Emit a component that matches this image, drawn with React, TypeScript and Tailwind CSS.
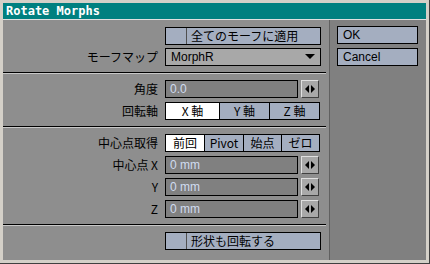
import React from 'react';

const jp = "font-['MS_Gothic','Noto_Sans_CJK_JP',sans-serif]";

function Arrows() {
  return (
    <div className="w-[18px] h-[18px] ml-[3px] bg-[#a8a8a8] border border-[#e0e0e0] border-r-[#404040] border-b-[#404040] flex items-center justify-center">
      <svg width="10" height="8" viewBox="0 0 10 8">
        <polygon points="4,0 4,8 0,4" fill="#000" />
        <polygon points="6,0 6,8 10,4" fill="#000" />
      </svg>
    </div>
  );
}

function Row({ label, children }: { label: string; children: React.ReactNode }) {
  return (
    <div className="flex items-center h-[18px]">
      <div className={`w-[155px] text-right text-[12px] text-black ${jp}`}>{label}</div>
      <div className="ml-[7px] flex items-center">{children}</div>
    </div>
  );
}

function Field({ value }: { value: string }) {
  return (
    <div className="flex items-center">
      <div className="w-[133px] h-[18px] bg-[#808080] border border-black text-[12px] text-[#d0dcf0] px-[4px] leading-[16px] font-['Liberation_Sans',sans-serif]">
        {value}
      </div>
      <Arrows />
    </div>
  );
}

function Seg({ items, active }: { items: { t: string; w: number }[]; active: number }) {
  return (
    <div className="flex h-[18px] border border-black">
      {items.map((it, i) => (
        <div
          key={it.t}
          style={{ width: it.w }}
          className={`flex items-center justify-center text-[12px] text-black ${jp} ${i > 0 ? 'border-l border-black' : ''} ${i === active ? 'bg-white' : 'bg-[#a4aec0]'}`}
        >
          {it.t}
        </div>
      ))}
    </div>
  );
}

function Sep() {
  return (
    <div className="my-[6px] mr-[3px]">
      <div className="h-[1px] bg-black" />
      <div className="h-[1px] bg-[#c8c8c8]" />
    </div>
  );
}

function Check({ label }: { label: string }) {
  return (
    <div className="flex w-[156px] h-[18px] border border-black bg-[#a4aec0]">
      <div className="w-[21px] border-r border-[#505050]" />
      <div className={`pl-[4px] text-[12px] leading-[16px] text-black ${jp}`}>{label}</div>
    </div>
  );
}

export default function App() {
  return (
    <div className="w-[430px] h-[264px] bg-[#d4d0c8] border-r border-b border-[#404040] pt-[3px] pl-[3px] pr-[3px] pb-[3px] flex flex-col">
      <div className="h-[16px] bg-[#008080] text-white font-bold text-[12px] leading-[16px] pl-[3px] font-['DejaVu_Sans_Mono',monospace]">
        Rotate Morphs
      </div>
      <div className="flex flex-1 border-t border-[#e0e0e0]">
        <div className="w-[327px] bg-[#8e8e8e] border-r border-[#606060] pt-[7px]">
          <div className="flex flex-col gap-[3px]">
            <Row label="">
              <Check label="全てのモーフに適用" />
            </Row>
            <Row label="モーフマップ">
              <div className="w-[156px] h-[18px] bg-[#a8a8a8] border border-black flex items-center justify-between px-[5px] text-[12px] text-black font-['Liberation_Sans',sans-serif]">
                MorphR
                <svg width="10" height="6" viewBox="0 0 10 6">
                  <polygon points="0,0 10,0 5,5" fill="#000" />
                </svg>
              </div>
            </Row>
          </div>
          <Sep />
          <div className="flex flex-col gap-[4px]">
            <Row label="角度">
              <Field value="0.0" />
            </Row>
            <Row label="回転軸">
              <Seg
                active={0}
                items={[
                  { t: 'X 軸', w: 53 },
                  { t: 'Y 軸', w: 50 },
                  { t: 'Z 軸', w: 50 },
                ]}
              />
            </Row>
          </div>
          <Sep />
          <div className="flex flex-col gap-[4px]">
            <Row label="中心点取得">
              <Seg
                active={0}
                items={[
                  { t: '前回', w: 38 },
                  { t: 'Pivot', w: 39 },
                  { t: '始点', w: 38 },
                  { t: 'ゼロ', w: 38 },
                ]}
              />
            </Row>
            <Row label="中心点 X">
              <Field value="0 mm" />
            </Row>
            <Row label="Y">
              <Field value="0 mm" />
            </Row>
            <Row label="Z">
              <Field value="0 mm" />
            </Row>
          </div>
          <Sep />
          <Row label="">
            <Check label="形状も回転する" />
          </Row>
        </div>
        <div className="flex-1 bg-[#808080] pt-[6px] pl-[7px] flex flex-col gap-[4px]">
          <div className="w-[81px] h-[18px] bg-[#a4aec0] border border-black text-[12px] leading-[16px] pl-[5px] text-black font-['Liberation_Sans',sans-serif]">
            OK
          </div>
          <div className="w-[81px] h-[18px] bg-[#a4aec0] border border-black text-[12px] leading-[16px] pl-[5px] text-black font-['Liberation_Sans',sans-serif]">
            Cancel
          </div>
        </div>
      </div>
    </div>
  );
}
